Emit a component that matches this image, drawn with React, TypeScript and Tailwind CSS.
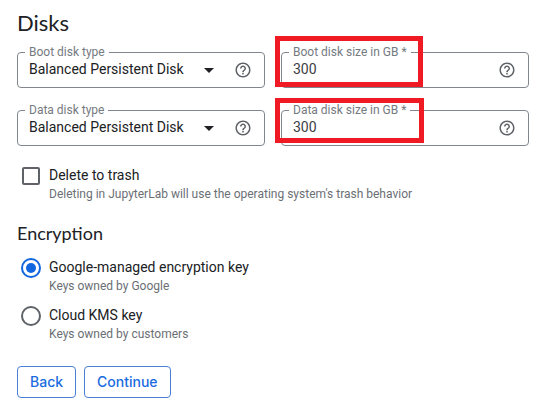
import type { ReactNode } from "react";

function HelpIcon() {
  return (
    <svg viewBox="0 0 24 24" className="size-[18px]" fill="#5f6368" aria-hidden="true">
      <path d="M11 18h2v-2h-2v2zm1-16C6.48 2 2 6.48 2 12s4.48 10 10 10 10-4.48 10-10S17.52 2 12 2zm0 18c-4.41 0-8-3.59-8-8s3.59-8 8-8 8 3.59 8 8-3.59 8-8 8zm0-14c-2.21 0-4 1.79-4 4h2c0-1.1.9-2 2-2s2 .9 2 2c0 2-3 1.75-3 5h2c0-2.25 3-2.5 3-5 0-2.21-1.79-4-4-4z" />
    </svg>
  );
}

function Field({ id, label, children }: { id: string; label: string; children: ReactNode }) {
  return (
    <fieldset className="h-11 min-w-0 rounded-[4px] border border-[#80868b] pl-[7px] pr-3">
      <legend className="h-4 px-1 text-xs leading-4 text-[#757a80]">
        <label htmlFor={id}>{label}</label>
      </legend>
      <div className="flex h-[18px] items-center pl-1">
        {children}
        <button type="button" aria-label={"Help: " + label} className="mt-0.5 shrink-0">
          <HelpIcon />
        </button>
      </div>
    </fieldset>
  );
}

function DiskType({ id, label }: { id: string; label: string }) {
  return (
    <Field id={id} label={label}>
      <select id={id} className="min-w-0 flex-1 appearance-none bg-transparent text-sm leading-5 outline-none">
        <option>Balanced Persistent Disk</option>
      </select>
      <svg viewBox="0 0 10 5" className="mr-5 mt-0.5 h-[5px] w-2.5 shrink-0" fill="#202124" aria-hidden="true">
        <path d="M0 0h10L5 5z" />
      </svg>
    </Field>
  );
}

function DiskSize({ id, label, highlight }: { id: string; label: string; highlight: string }) {
  return (
    <div className="relative min-w-0">
      <Field id={id} label={label}>
        <input id={id} defaultValue="300" className="min-w-0 flex-1 bg-transparent text-sm leading-5 text-[#3c4043] outline-none" />
      </Field>
      <div className={"pointer-events-none absolute -left-1.5 border-5 border-[#ef1a23] " + highlight} />
    </div>
  );
}

function EncryptionOption({ id, title, hint, checked }: { id: string; title: string; hint: string; checked?: boolean }) {
  return (
    <div className="flex items-start gap-2 pl-1">
      <input
        id={id}
        type="radio"
        name="encryption"
        defaultChecked={checked}
        className="mt-px size-5 shrink-0 appearance-none rounded-full border-2 border-[#5f6368] bg-white bg-clip-content p-[3px] checked:border-[#1267e0] checked:bg-[#1267e0]"
      />
      <div>
        <label htmlFor={id} className="block text-sm leading-5">{title}</label>
        <p className="text-xs leading-[18px] text-[#6b6f75]">{hint}</p>
      </div>
    </div>
  );
}

const buttonClass =
  "h-8 rounded-[4px] border border-[#4a80d4] px-3 font-['Inter',sans-serif] text-sm font-medium text-[#1a6be0]";

export default function App() {
  return (
    <main className="bg-white pl-[17px] pr-[13px] pt-2 font-['Roboto',sans-serif] text-[#202124]">
      <h1 className="font-['Lato',sans-serif] text-[22px] leading-[30px]">Disks</h1>
      <div className="mt-1.5 grid grid-cols-2 gap-x-4 gap-y-3.5">
        <DiskType id="boot-type" label="Boot disk type" />
        <DiskSize id="boot-size" label="Boot disk size in GB *" highlight="-top-2 h-[51px] w-[148px]" />
        <DiskType id="data-type" label="Data disk type" />
        <DiskSize id="data-size" label="Data disk size in GB *" highlight="-top-1 h-[45px] w-[149px]" />
      </div>
      <div className="mt-[19px] flex items-start gap-2 pl-1">
        <div className="mt-px flex size-5 items-center justify-center">
          <input id="trash" type="checkbox" className="size-[18px] appearance-none rounded-[2px] border-2 border-[#5f6368] bg-white checked:bg-[#1267e0]" />
        </div>
        <div>
          <label htmlFor="trash" className="block text-sm leading-5">Delete to trash</label>
          <p className="text-xs leading-[18px] text-[#6b6f75]">Deleting in JupyterLab will use the operating system's trash behavior</p>
        </div>
      </div>
      <h2 className="mt-[18px] font-['Lato',sans-serif] text-lg leading-6">Encryption</h2>
      <div className="mt-3 flex flex-col gap-2.5">
        <EncryptionOption id="google-key" title="Google-managed encryption key" hint="Keys owned by Google" checked />
        <EncryptionOption id="kms-key" title="Cloud KMS key" hint="Keys owned by customers" />
      </div>
      <div className="mt-[23px] flex gap-2 pb-4">
        <button type="button" className={buttonClass}>Back</button>
        <button type="button" className={buttonClass}>Continue</button>
      </div>
    </main>
  );
}
